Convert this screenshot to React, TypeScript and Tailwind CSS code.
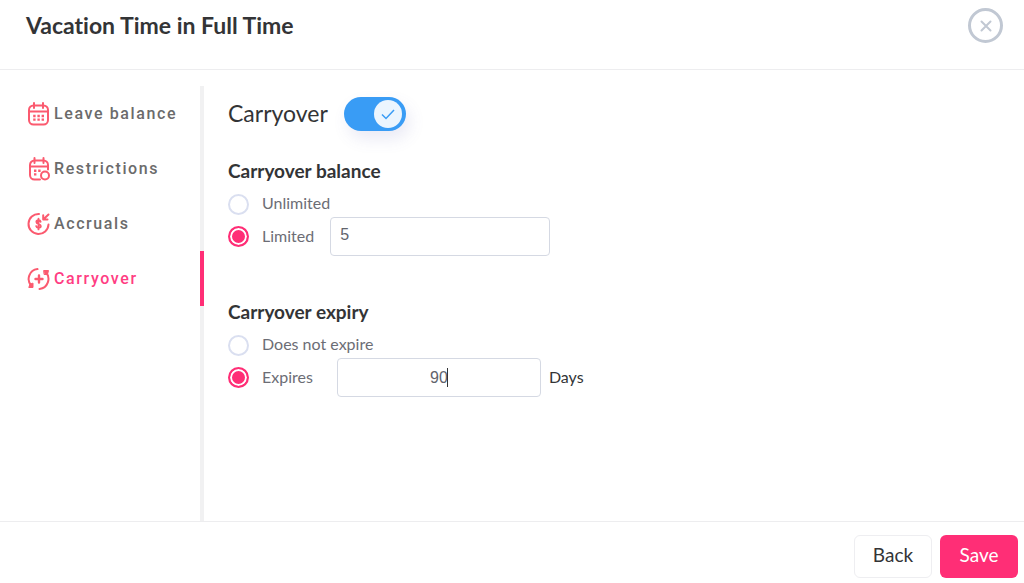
import React, { useState } from "react";

const stroke = {
  fill: "none",
  stroke: "#fb5a6f",
  strokeWidth: 2,
  strokeLinecap: "round" as const,
  strokeLinejoin: "round" as const,
};

function CalendarIcon() {
  return (
    <svg className="h-6 w-6 shrink-0" viewBox="0 0 24 24" {...stroke} aria-hidden="true">
      <rect x="2" y="3.5" width="19" height="19" rx="4.5" />
      <path d="M2 9.5h19M7 1v5M16 1v5" />
      <path strokeLinecap="butt" strokeWidth="2.4" strokeDasharray="2.4 1.8" d="M6.2 14h11M6.2 17.600h11" />
    </svg>
  );
}

function RestrictionsIcon() {
  return (
    <svg className="h-6 w-6 shrink-0" viewBox="0 0 24 24" {...stroke} aria-hidden="true">
      <path d="M21 12.5V8a4.500 4.500 0 0 0-4.500-4.500h-9A4.500 4.500 0 0 0 3 8v10a4.500 4.500 0 0 0 4.500 4.500H13" />
      <path d="M3 9.500h18M7.500 1v5M16.500 1v5" />
      <circle cx="18" cy="18.500" r="4" />
      <path strokeLinecap="butt" strokeWidth="2.4" strokeDasharray="2.4 1.8" d="M7 13.800h6.600M7 17.400h2.400" />
    </svg>
  );
}

function AccrualsIcon() {
  return (
    <svg className="h-6 w-6 shrink-0" viewBox="0 0 24 24" {...stroke} aria-hidden="true">
      <path d="M12 2A10 10 0 1 0 21.500 12.500" />
      <path d="M21.500 2.500 16.500 7.300M16.200 3.300v4.300h4.300" />
      <path
        strokeWidth="1.900"
        d="M13.600 9.800c-.2-1-1-1.500-2.100-1.500-1.200 0-2.100.7-2.100 1.800 0 2.600 4.400 1.300 4.400 3.900 0 1.100-1 1.800-2.300 1.800-1.200 0-2.100-.6-2.300-1.700M11.500 6.800v10.600"
      />
    </svg>
  );
}

function CarryoverIcon() {
  return (
    <svg className="h-6 w-6 shrink-0" viewBox="0 0 24 24" {...stroke} aria-hidden="true">
      <path d="M10.500 2.100A10 10 0 0 0 4.500 19M12.500 22A10 10 0 0 0 18.500 5" />
      <path strokeWidth="2.400" d="M8.500 12h7M12 8.500v7" />
      <path fill="#fb5a6f" strokeWidth="1" d="M17 3.500h4.500L20.500 7.500h-3zM6 16.500v4H1.800l1-3z" />
    </svg>
  );
}

const items = [
  { label: "Leave balance", Icon: CalendarIcon },
  { label: "Restrictions", Icon: RestrictionsIcon },
  { label: "Accruals", Icon: AccrualsIcon },
  { label: "Carryover", Icon: CarryoverIcon },
];

const radio =
  "h-[21px] w-[21px] shrink-0 appearance-none rounded-full border-2 border-[#dadff0] bg-white checked:border-[#ff2e76] checked:bg-[#ff2e76] checked:shadow-[inset_0_0_0_2px_#fff]";
const option = "flex items-center gap-[13px] text-base text-[#6c6d75]";
const heading = "float-left mb-[7px] w-full text-[19px] leading-7 font-bold";
const field =
  "h-[39px] rounded-sm border border-[#d5d9e3] bg-white font-['Liberation_Sans',sans-serif] text-base text-[#62646c] outline-none";

type OptionProps = {
  name: string;
  label: string;
  checked: boolean;
  onSelect: () => void;
};

function Option({ name, label, checked, onSelect }: OptionProps) {
  return (
    <label className={option}>
      <input type="radio" name={name} checked={checked} onChange={onSelect} className={radio} />
      <span className="pb-0.5 leading-[22px]">{label}</span>
    </label>
  );
}

export default function App() {
  const [active, setActive] = useState("Carryover");
  const [enabled, setEnabled] = useState(true);
  const [balance, setBalance] = useState("limited");
  const [expiry, setExpiry] = useState("expires");
  const [limit, setLimit] = useState("5");
  const [days, setDays] = useState("90");

  return (
    <div className="flex min-h-screen flex-col bg-white font-['Lato',sans-serif] text-[#333436] [font-variant-ligatures:none]">
      <header className="flex items-start justify-between border-b border-[#ededef] pt-2 pr-[21px] pb-[26px] pl-[26px]">
        <h1 className="pt-px text-[23px] leading-8 font-bold">Vacation Time in Full Time</h1>
        <button
          type="button"
          aria-label="Close"
          className="flex h-[35px] w-[35px] items-center justify-center rounded-full border-[3px] border-[#c1c8d3]"
        >
          <svg className="h-3 w-3" viewBox="0 0 12 12" fill="none" stroke="#c1c8d3" strokeWidth="2" strokeLinecap="round" aria-hidden="true">
            <path d="m1.500 1.500 9 9M10.500 1.500l-9 9" />
          </svg>
        </button>
      </header>

      <div className="flex grow pt-4">
        <nav className="flex w-[204px] shrink-0 flex-col bg-linear-to-l from-[#f1f1f2] from-[4px] to-white to-[4px]">
          {items.map(({ label, Icon }) => (
            <button
              key={label}
              type="button"
              onClick={() => setActive(label)}
              className={
                "flex h-[55px] items-center gap-[3px] border-r-4 pt-px pl-[27px] font-['Roboto',sans-serif] text-base font-medium tracking-widest " +
                (active === label ? "border-[#ff2e76] text-[#ff3d83]" : "border-transparent text-[#6b6b6b]")
              }
            >
              <Icon />
              {label}
            </button>
          ))}
        </nav>

        <main className="grow px-6 pt-2">
          <div className="flex items-center gap-4">
            <label htmlFor="carryover" className="pb-0.5 text-[23px] leading-[38px]">
              Carryover
            </label>
            <span className="relative flex">
              <input
                id="carryover"
                type="checkbox"
                role="switch"
                checked={enabled}
                onChange={() => setEnabled(!enabled)}
                className="h-[34px] w-[62px] appearance-none rounded-full bg-slate-300 shadow-[4px_8px_16px_rgba(90,90,180,0.13)] checked:bg-[#399cf5]"
              />
              <span
                className={
                  "pointer-events-none absolute top-[3px] flex h-7 w-7 items-center justify-center rounded-full bg-[#ebf5fe] " +
                  (enabled ? "right-1" : "left-1")
                }
              >
                <svg className="h-4 w-4" viewBox="0 0 16 16" fill="none" stroke="#399cf5" strokeWidth="1.500" aria-hidden="true">
                  <path d="m2 8.500 4 4L14 4" />
                </svg>
              </span>
            </span>
          </div>

          <fieldset className="pt-[23px]">
            <legend className={heading}>Carryover balance</legend>
            <div className="clear-both">
              <Option name="balance" label="Unlimited" checked={balance === "unlimited"} onSelect={() => setBalance("unlimited")} />
            </div>
            <div className="mt-px flex items-center gap-4">
              <Option name="balance" label="Limited" checked={balance === "limited"} onSelect={() => setBalance("limited")} />
              <input aria-label="Carryover limit" value={limit} onChange={(e) => setLimit(e.target.value)} className={field + " w-[220px] px-[9px] pb-1"} />
            </div>
          </fieldset>

          <fieldset className="pt-[42px]">
            <legend className={heading}>Carryover expiry</legend>
            <div className="clear-both">
              <Option name="expiry" label="Does not expire" checked={expiry === "never"} onSelect={() => setExpiry("never")} />
            </div>
            <div className="mt-px flex items-center">
              <Option name="expiry" label="Expires" checked={expiry === "expires"} onSelect={() => setExpiry("expires")} />
              <span className="relative ml-6 flex">
                <input id="days" value={days} onChange={(e) => setDays(e.target.value)} className={field + " w-[204px] px-2 text-center"} />
                <span className="pointer-events-none absolute top-[10px] left-1/2 ml-2 h-[19px] w-px bg-[#333436]" />
              </span>
              <label htmlFor="days" className="ml-2 pb-0.5 text-base">
                Days
              </label>
            </div>
          </fieldset>
        </main>
      </div>

      <footer className="flex justify-end gap-2 border-t border-[#ededef] pt-[13px] pr-[6px] pb-[5px] text-[19px]">
        <button type="button" className="h-[43px] w-[78px] rounded-md border border-[#eeeef1] bg-white pb-0.5">
          Back
        </button>
        <button type="button" className="h-[43px] w-[78px] rounded-md bg-[#ff2e76] pb-0.5 text-white">
          Save
        </button>
      </footer>
    </div>
  );
}
